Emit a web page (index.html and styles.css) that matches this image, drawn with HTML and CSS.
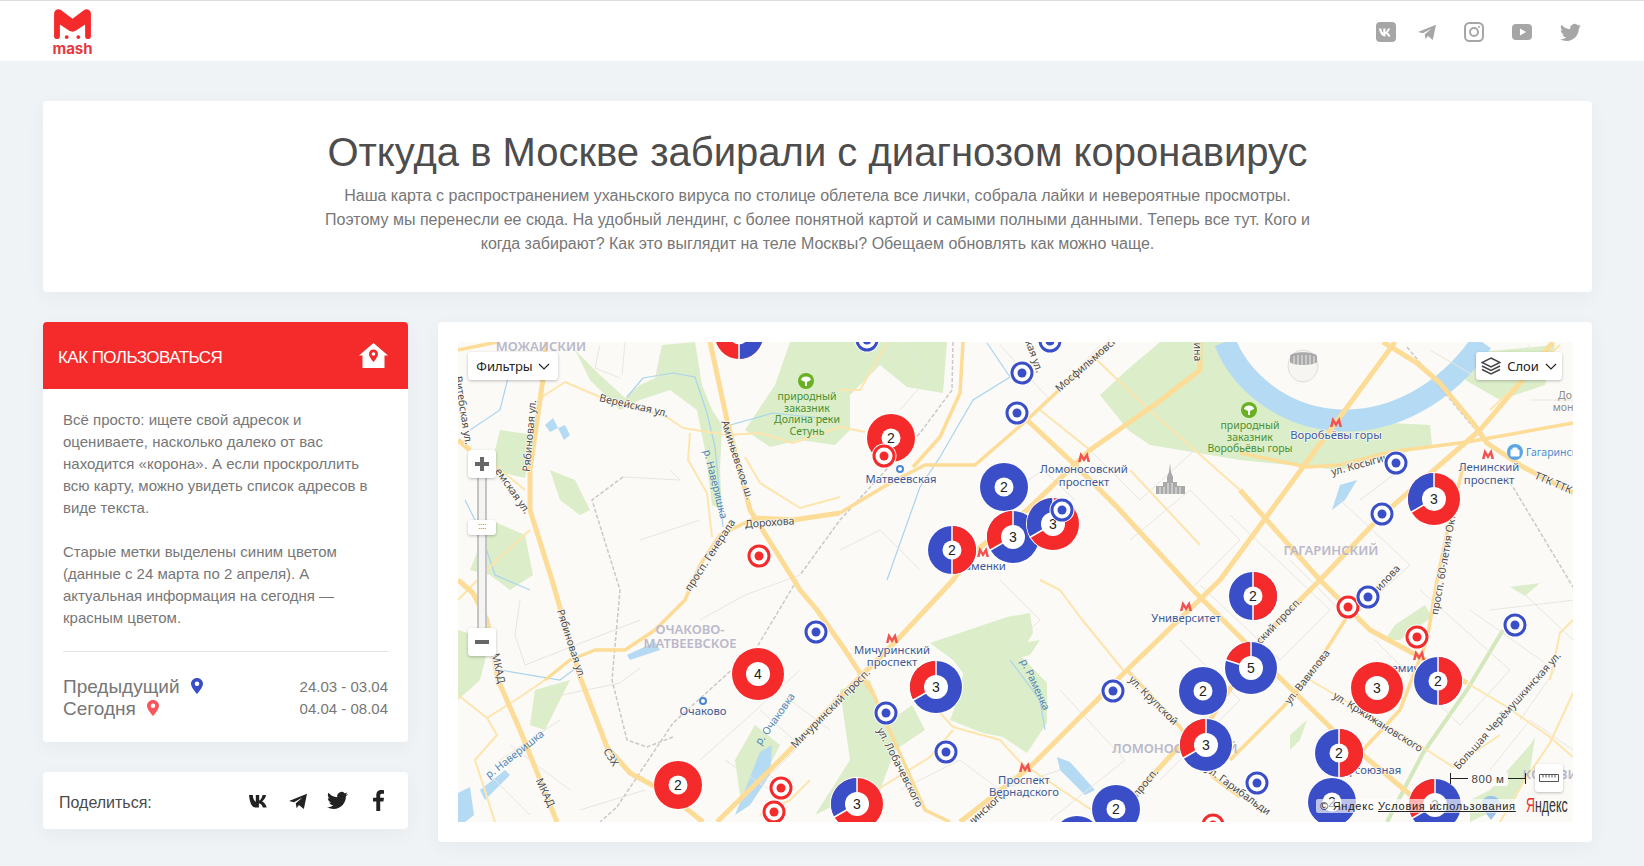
FILE: index.html
```html
<!DOCTYPE html>
<html lang="ru">

<head>
    <meta charset="UTF-8">
    <title>Откуда в Москве забирали с диагнозом коронавирус</title>
    <link rel="stylesheet" href="styles.css">
</head>

<body>
    <header class="topbar">
        <a class="logo" href="#">
            <svg class="logo-mark" viewBox="0 0 40 33">
                <path d="M1 5C1 1 5-1 8 1L20 10 32 1C35-1 39 1 39 5V28C39 32 33 32 33 28V16L24 22C21 24 19 24 16 22L7 16V28C7 32 1 32 1 28Z" />
                <circle cx="14" cy="29" r="2" />
                <circle cx="26" cy="29" r="2" />
            </svg>
            <span class="logo-text">mash</span>
        </a>
        <nav class="social">
            <svg viewBox="0 0 20 20">
                <rect width="20" height="20" rx="4" />
                <path class="cut" d="M3 6.500h2.300c.2 2.600 1.200 4 2 4.300V6.500h2.200v3.500c.9-.1 1.800-1.700 2.200-3.500H14c-.3 2-1.700 3.400-2.600 4 1 .5 2.500 1.700 3.100 3.900h-2.400c-.5-1.500-1.600-2.500-2.600-2.700v2.700h-.4C5.900 14.400 3.800 11.500 3 6.500Z" />
            </svg>
            <svg class="soc-tg" viewBox="0 0 20 20">
                <path d="M0 10 20 2 16.500 19 11 14.500 8.500 18 7.500 12.500 15 6 5.500 11.500Z" />
            </svg>
            <svg viewBox="0 0 20 20" class="insta">
                <rect x="1" y="1" width="18" height="18" rx="4.500" />
                <circle cx="10" cy="10" r="4" />
                <circle class="dot" cx="15" cy="5" r="1" />
            </svg>
            <svg viewBox="0 0 20 20">
                <rect y="2" width="20" height="16" rx="4" />
                <path class="cut" d="M8 6.500 14 10 8 13.500Z" />
            </svg>
            <svg class="soc-tw" viewBox="0 0 24 24">
                <path d="M23.953 4.570a10 10 0 01-2.825.775 4.958 4.958 0 002.163-2.723c-.951.555-2.005.959-3.127 1.184a4.920 4.920 0 00-8.384 4.482C7.690 8.095 4.067 6.130 1.640 3.162a4.822 4.822 0 00-.666 2.475c0 1.710.870 3.213 2.188 4.096a4.904 4.904 0 01-2.228-.616v.060a4.923 4.923 0 003.946 4.827 4.996 4.996 0 01-2.212.085 4.936 4.936 0 004.604 3.417 9.867 9.867 0 01-6.102 2.105c-.390 0-.779-.023-1.170-.067a13.995 13.995 0 007.557 2.209c9.053 0 13.998-7.496 13.998-13.985 0-.210 0-.420-.015-.630A9.935 9.935 0 0024 4.590z" />
            </svg>
        </nav>
    </header>

    <main class="page">
        <section class="card intro">
            <h1>Откуда в Москве забирали с диагнозом коронавирус</h1>
            <p>Наша карта с распространением уханьского вируса по столице облетела все лички, собрала лайки и невероятные просмотры. Поэтому мы перенесли ее сюда. На удобный лендинг, с более понятной картой и самыми полными данными. Теперь все тут. Кого и когда забирают? Как это выглядит на теле Москвы? Обещаем обновлять как можно чаще.</p>
        </section>

        <div class="columns">
            <aside class="sidebar">
                <section class="card howto">
                    <div class="howto-head">
                        <span class="howto-title">КАК ПОЛЬЗОВАТЬСЯ</span>
                        <svg viewBox="0 0 29 25">
                            <path fill-rule="evenodd" d="M14.500 0 29 12.500H25.500V25H3.500V12.500H0ZM14.500 6.500C11.800 6.500 10 8.500 10 11 10 14 14.500 19 14.500 19S19 14 19 11C19 8.500 17.200 6.500 14.500 6.500ZM14.500 9.200A1.800 1.800 0 1 1 14.500 12.800 1.800 1.800 0 1 1 14.500 9.200Z" />
                        </svg>
                    </div>
                    <div class="howto-body">
                        <p>Всё просто: ищете свой адресок и оцениваете, насколько далеко от вас находится «корона». А если проскроллить всю карту, можно увидеть список адресов в виде текста.</p>
                        <p>Старые метки выделены синим цветом (данные с 24 марта по 2 апреля). А актуальная информация на сегодня — красным цветом.</p>
                        <div class="legend">
                            <div class="legend-row">
                                <span class="legend-name">Предыдущий
                                    <svg class="pin pin-blue" viewBox="0 0 12 16"><path fill-rule="evenodd" d="M6 0C2.700 0 0 2.500 0 5.800 0 9.800 6 16 6 16S12 9.800 12 5.800C12 2.500 9.300 0 6 0ZM6 3.500A2.300 2.300 0 1 1 6 8.100 2.300 2.300 0 1 1 6 3.500Z" /></svg>
                                </span>
                                <span class="legend-date">24.03 - 03.04</span>
                            </div>
                            <div class="legend-row">
                                <span class="legend-name">Сегодня
                                    <svg class="pin pin-red" viewBox="0 0 12 16"><path fill-rule="evenodd" d="M6 0C2.700 0 0 2.500 0 5.800 0 9.800 6 16 6 16S12 9.800 12 5.800C12 2.500 9.300 0 6 0ZM6 3.500A2.300 2.300 0 1 1 6 8.100 2.300 2.300 0 1 1 6 3.500Z" /></svg>
                                </span>
                                <span class="legend-date">04.04 - 08.04</span>
                            </div>
                        </div>
                    </div>
                </section>

                <section class="card share">
                    <span class="share-label">Поделиться:</span>
                    <div class="share-icons">
                        <svg viewBox="0 0 20 14" class="ic-vk">
                            <path d="M0 1h3.800c.2 4 1.700 6.300 3 6.800V1h3.400v5.500c1.300-.1 2.800-2.700 3.400-5.500h3.500c-.5 3.200-2.700 5.400-4.100 6.300 1.500.8 3.700 2.700 4.700 6.200h-3.800c-.7-2.300-2.500-4-4-4.200v4.200H6.500C2.700 13.500.8 8.700 0 1Z" />
                        </svg>
                        <svg viewBox="0 0 20 20" class="ic-tg">
                            <path d="M0 10 20 2 16.500 19 11 14.500 8.500 18 7.500 12.500 15 6 5.500 11.500Z" />
                        </svg>
                        <svg viewBox="0 0 24 24" class="ic-tw">
                            <path d="M23.953 4.570a10 10 0 01-2.825.775 4.958 4.958 0 002.163-2.723c-.951.555-2.005.959-3.127 1.184a4.920 4.920 0 00-8.384 4.482C7.690 8.095 4.067 6.130 1.640 3.162a4.822 4.822 0 00-.666 2.475c0 1.710.870 3.213 2.188 4.096a4.904 4.904 0 01-2.228-.616v.060a4.923 4.923 0 003.946 4.827 4.996 4.996 0 01-2.212.085 4.936 4.936 0 004.604 3.417 9.867 9.867 0 01-6.102 2.105c-.390 0-.779-.023-1.170-.067a13.995 13.995 0 007.557 2.209c9.053 0 13.998-7.496 13.998-13.985 0-.210 0-.420-.015-.630A9.935 9.935 0 0024 4.590z" />
                        </svg>
                        <svg viewBox="0 0 11 21" class="ic-fb">
                            <path d="M7.200 21V11.500H10.400L11 7.700H7.200V5.500C7.200 4.400 7.500 3.700 9 3.700H11V.3C10.500.2 9.500 0 8.300 0 5.400 0 3.300 1.800 3.300 5.100V7.700H0V11.500H3.300V21Z" />
                        </svg>
                    </div>
                </section>
            </aside>

            <section class="card map-card">
                <div class="map">
                    <!-- viewBox совпадает с координатами страницы, так проще сверять с картой -->
                    <svg class="map-canvas" viewBox="458 342 1115 480">
                        <defs>
                            <g id="metro"><path d="M-6 5-3.500-5 0 .5 3.500-5 6 5H3.500L2.500 1 0 5-2.500 1-3.500 5Z" /></g>
                            <g id="rail"><circle r="3" /></g>
                            <g id="tb">
                                <circle r="12.500" class="halo" />
                                <circle r="10" class="ring-line blue-line" />
                                <circle r="4.500" class="fill-blue" />
                            </g>
                            <g id="tr">
                                <circle r="12.500" class="halo" />
                                <circle r="10" class="ring-line red-line" />
                                <circle r="4.500" class="fill-red" />
                            </g>
                            <g id="c-red24"><circle r="25" class="halo" /><circle r="24" class="fill-red" /><circle r="9.500" class="hole" /></g>
                            <g id="c-blue24"><circle r="25" class="halo" /><circle r="24" class="fill-blue" /><circle r="9.500" class="hole" /></g>
                            <g id="c-red26"><circle r="27" class="halo" /><circle r="26" class="fill-red" /><circle r="12" class="hole" /></g>
                            <g id="c-half">
                                <circle r="25" class="halo" />
                                <circle r="24" class="fill-blue" />
                                <path d="M0-24A24 24 0 0 1 0 24Z" class="fill-red" />
                                <path d="M0-25V25" class="sep" />
                                <circle r="9.500" class="hole" />
                            </g>
                            <g id="c-half-inv">
                                <circle r="25" class="halo" />
                                <circle r="24" class="fill-red" />
                                <path d="M0-24A24 24 0 0 1 0 24Z" class="fill-blue" />
                                <path d="M0-25V25" class="sep" />
                                <circle r="9.500" class="hole" />
                            </g>
                            <g id="c-3a">
                                <circle r="27" class="halo" />
                                <circle r="26" class="fill-red" />
                                <path d="M0 0-22.500 13A26 26 0 0 1 0-26Z" class="fill-blue" />
                                <path d="M0 0V-27M0 0-23.400 13.500" class="sep" />
                                <circle r="12" class="hole" />
                            </g>
                            <g id="c-3b">
                                <circle r="27" class="halo" />
                                <circle r="26" class="fill-blue" />
                                <path d="M0 0-22.500 13A26 26 0 0 1 0-26Z" class="fill-red" />
                                <path d="M0 0V-27M0 0-23.400 13.500" class="sep" />
                                <circle r="12" class="hole" />
                            </g>
                            <g id="c-5">
                                <circle r="27" class="halo" />
                                <circle r="26" class="fill-blue" />
                                <path d="M0 0-24.700-8A26 26 0 0 1 0-26Z" class="fill-red" />
                                <path d="M0 0V-27M0 0-25.700-8.300" class="sep" />
                                <circle r="12" class="hole" />
                            </g>
                        </defs>

                        <rect x="458" y="342" width="1115" height="480" class="land" />

                        <!-- зелень -->
                        <g class="green">
                            <path d="M1160 342H1223L1243 370 1273 410 1333 427 1390 423 1430 425 1432 445 1340 470 1240 460 1150 445 1128 430 1100 395 1127 370Z" />
                            <path d="M930 643 1007 617 1030 613 1033 633 1020 655 1047 683 1047 723 1027 753 1003 737 983 733 950 720 960 693 963 673 953 660Z" />
                            <path d="M575 350 600 375 625 398 640 385 655 378 662 345 695 342 702 385 712 410 722 425 720 470 722 510 712 505 705 450 697 410 670 390 640 400 620 410 590 380Z" />
                            <path d="M745 430 775 385 790 342H947L943 393 907 387 880 365 850 395 850 430 835 445 800 440 770 447Z" />
                            <path d="M840 690 870 680 885 725 912 705 925 730 895 750 880 790 845 800 815 815 850 760Z" />
                            <path d="M490 520 525 535 533 575 510 590 490 575 470 570Z" />
                            <path d="M500 430 535 435 525 478 490 470Z" />
                            <path d="M550 470 575 480 590 510 580 515 560 500 555 485Z" />
                            <path d="M1012 645 1040 640 1030 655 1010 660Z" />
                            <path d="M1480 352 1555 345 1545 385 1500 400 1465 380Z" />
                            <path d="M1490 790 1530 745 1535 737 1530 770 1515 800 1470 822 1470 800Z" />
                            <path d="M1395 625 1425 605 1432 617 1400 640 1385 640Z" />
                            <path d="M1290 735 1307 720 1300 740 1290 750Z" />
                            <path d="M458 630 490 640 480 680 458 700Z" />
                            <path d="M535 690 570 680 560 700 545 730 530 725Z" />
                            <path d="M1510 587 1540 583 1525 596Z" />
                            <path d="M755 725 780 745 750 805 740 795 735 760Z" />
                        </g>
                        <path class="strip" d="M1503 630 1467 690 1423 753 1387 822" />

                        <!-- вода -->
                        <path class="river" d="M1225 342C1240 380 1280 415 1333 420 1390 425 1445 395 1482 342" />
                        <g class="water">
                            <path d="M458 793 470 787 474 815 465 822H458Z" />
                            <path d="M545 425 553 418 558 428 550 432ZM558 428 565 425 570 435 564 440Z" />
                            <path d="M760 752 772 745 770 775 750 805 735 815 745 790Z" />
                            <path d="M627 655 655 642 660 650 630 660Z" />
                            <path d="M1057 757 1070 762 1095 790 1085 795 1060 770Z" />
                            <path d="M1340 485 1357 480 1345 500 1332 510Z" />
                            <path d="M480 790 505 770 510 775 485 800Z" />
                        </g>
                        <g class="stream">
                            <path d="M627 397 643 378 673 373 695 377 707 413 715 447 723 527" />
                            <path d="M723 427 773 413 840 420" />
                            <path d="M887 580 920 487 940 457 973 400 1010 377 987 343" />
                            <path d="M1010 660 1040 700 1045 730" />
                            <path d="M465 500 480 530 495 575 530 590M470 430 500 410 510 370" />
                            <path d="M500 670 560 680 580 665" />
                        </g>

                        <!-- мелкие улицы -->
                        <g class="lane">
                            <path d="M600 345 595 368 620 378M625 342 622 375M660 355 658 380" />
                            <path d="M640 540 700 520M622 477 680 480 670 470M538 700 620 683 640 668" />
                            <path d="M580 810 645 790M700 620 745 595 800 575M640 620 525 665 515 635 520 600" />
                            <path d="M760 710 800 745 760 785M725 760 770 790M790 700 830 730M700 760 745 720 800 670" />
                            <path d="M1000 345 1050 400 1100 345M1090 450 1140 500 1200 445M1130 540 1190 490 1240 540 1190 590" />
                            <path d="M1000 500 1043 470 1075 500M1000 580 1040 620 1000 660" />
                            <path d="M1060 690 1125 760 1050 820M1180 640 1240 700 1160 780" />
                            <path d="M1230 515 1330 610 1280 660 1200 585M1340 500 1410 565 1350 620 1290 560" />
                            <path d="M1420 590 1510 670 1460 725 1375 640M1470 610 1555 670 1520 720" />
                            <path d="M1520 590 1573 640M1490 610 1575 600M1490 770 1530 720 1573 750" />
                            <path d="M500 760 560 720M490 775 530 815M510 745 570 790" />
                            <path d="M1360 500 1400 470M1430 350 1490 385 1530 345M1530 400 1573 400" />
                            <path d="M900 340 930 375 900 410M840 550 880 530 920 570M900 790 960 760 1000 790 1060 770" />
                        </g>

                        <!-- железная дорога -->
                        <g class="rails">
                            <path d="M797 580 757 647 673 723 617 807 600 822" />
                            <path d="M623 477 592 500 620 590 612 680 627 740 647 747 673 737" />
                            <path d="M953 342 952 390 920 433 840 520 800 575" />
                            <path d="M1407 347 1473 427M1507 477 1573 587" />
                        </g>

                        <!-- второстепенные дороги -->
                        <g class="road-minor">
                            <path d="M542 397 565 382 600 397 667 417 683 428 727 435 760 433 793 443 840 427 865 432" />
                            <path d="M745 457 760 483 800 508 840 497M690 433 688 460 707 493 712 537" />
                            <path d="M887 343 860 390 840 390M1097 360 1147 408 1240 490" />
                            <path d="M880 788 930 757 953 730M940 713 953 727 1000 740 1020 762 1087 807 1115 822" />
                            <path d="M1040 580 1060 590 1080 617 1123 670M1090 450 1040 410M1130 470 1200 545" />
                            <path d="M1310 680 1373 717 1427 750 1453 767 1473 753 1500 735" />
                            <path d="M1573 693 1550 743 1523 783 1500 822M1573 620 1560 633 1550 680" />
                            <path d="M458 695 487 718 520 697 545 680M487 718 497 735 475 760 495 822" />
                            <path d="M458 600 497 560 530 530M470 450 497 467 525 490" />
                            <path d="M1467 683 1507 707 1550 737 1573 757" />
                            <path d="M1560 345 1490 410" />
                            <path d="M760 815 790 800 810 780" />
                        </g>

                        <!-- основные дороги -->
                        <g class="road-mid">
                            <path d="M755 518 720 535 700 565 685 600 655 630 625 650 595 650 570 660 545 680" />
                            <path d="M840 513 890 483 925 465 975 465 1027 420 1110 342" />
                            <path d="M873 693 925 810 950 822" />
                            <path d="M1127 670 1180 727 1213 777 1240 797" />
                            <path d="M1230 760 1283 707 1307 680 1347 617" />
                            <path d="M1463 467 1447 533 1437 580 1427 640 1400 710 1363 750" />
                            <path d="M1240 453 1307 467 1340 465 1390 452 1467 442 1573 423" />
                            <path d="M458 350 497 342M542 380 546 342" />
                            <path d="M963 342 960 393 940 437 913 467" />
                        </g>
                        <g class="road-major">
                            <path d="M710 342 727 420 750 510 777 553 800 590 817 610 845 650 873 693" />
                            <path d="M840 513 793 520 755 518" />
                            <path d="M458 580 473 593 487 620 498 680 520 730 557 822" />
                            <path d="M545 365 530 470 530 510 552 580 580 677 607 747 630 773 667 793 703 822" />
                            <path d="M1027 420 1073 463 1117 507 1193 590 1240 637 1277 675 1333 730 1413 797 1430 822" />
                            <path d="M1200 342 1200 370 1157 403 1090 450 1027 510 973 553 953 580 900 637 840 697 787 753 717 822" />
                            <path d="M1240 490 1320 580 1370 630 1407 650 1467 683" />
                            <path d="M1553 342 1520 383 1480 430 1380 517 1320 580 1263 637 1210 720 1173 753 1133 797 1100 822" />
                            <path d="M1395 342 1340 417 1303 467 1220 580 1127 670 1030 767 960 822" />
                            <path d="M1383 342 1417 363 1440 383 1473 423 1487 443 1523 467 1573 493" />
                            <path d="M458 440 470 450" />
                        </g>

                        <!-- районы -->
                        <g class="lb-area">
                            <text x="541" y="351">МОЖАЙСКИЙ</text>
                            <text x="690" y="634">ОЧАКОВО-</text>
                            <text x="690" y="648">МАТВЕЕВСКОЕ</text>
                            <text x="1331" y="555">ГАГАРИНСКИЙ</text>
                            <text x="1175" y="753">ЛОМОНОСОВСКИЙ</text>
                            <text x="1560" y="779">КОРОВИНО</text>
                        </g>
                        <g class="lb-grey">
                            <text x="1565" y="399">До</text>
                            <text x="1563" y="411">мон</text>
                        </g>

                        <!-- улицы -->
                        <g class="lb-road">
                            <text transform="translate(633 409) rotate(13)">Верейская ул.</text>
                            <text transform="translate(533 436) rotate(-85)">Рябиновая ул.</text>
                            <text transform="translate(568 645) rotate(72)">Рябиновая ул.</text>
                            <text transform="translate(460 411) rotate(81)">Витебская ул.</text>
                            <text transform="translate(734 461) rotate(72)">Аминьевское ш.</text>
                            <text transform="translate(770 526) rotate(-4)">Дорохова</text>
                            <text transform="translate(713 557) rotate(-57)">просп. Генерала</text>
                            <text transform="translate(510 493) rotate(55)">емская ул.</text>
                            <text transform="translate(495 669) rotate(78)">МКАД</text>
                            <text transform="translate(542 794) rotate(65)">МКАД</text>
                            <text transform="translate(608 759) rotate(58)">СЗХ</text>
                            <text transform="translate(833 711) rotate(-45)">Мичуринский просп.</text>
                            <text transform="translate(897 769) rotate(63)">ул. Лобачевского</text>
                            <text transform="translate(1093 363) rotate(-41)">Мосфильмовская</text>
                            <text transform="translate(1364 467) rotate(-15)">ул. Косыгина</text>
                            <text transform="translate(1552 486) rotate(23)">ТТК ТТК</text>
                            <text transform="translate(1449 553) rotate(-80)">просп. 60-летия Октября</text>
                            <text transform="translate(1151 703) rotate(45)">ул. Крупской</text>
                            <text transform="translate(1270 635) rotate(-46)">Ленинский просп.</text>
                            <text transform="translate(1310 679) rotate(-52)">ул. Вавилова</text>
                            <text transform="translate(1384 587) rotate(-47)">Вавилова</text>
                            <text transform="translate(1376 725) rotate(32)">ул. Кржижановского</text>
                            <text transform="translate(1510 713) rotate(-48)">Большая Черёмушкинская ул.</text>
                            <text transform="translate(1236 793) rotate(36)">ул. Гарибальди</text>
                            <text transform="translate(983 816) rotate(-42)">Ленинского</text>
                            <text transform="translate(1148 785) rotate(-50)">просп.</text>
                            <text transform="translate(1194 352) rotate(90)">ина</text>
                            <text transform="translate(1030 355) rotate(70)">ская ул.</text>
                        </g>
                        <g class="lb-river">
                            <text transform="translate(712 485) rotate(76)">р. Наверишка</text>
                            <text transform="translate(517 757) rotate(-38)">р. Наверишка</text>
                            <text transform="translate(778 721) rotate(-55)">р. Очаковка</text>
                            <text transform="translate(1032 686) rotate(65)">р. Раменка</text>
                        </g>

                        <!-- метро -->
                        <g class="lb-metro">
                            <text x="901" y="483">Матвеевская</text>
                            <text x="1084" y="473">Ломоносовский</text>
                            <text x="1084" y="486">проспект</text>
                            <text x="982" y="570">Раменки</text>
                            <text x="1489" y="471">Ленинский</text>
                            <text x="1489" y="484">проспект</text>
                            <text x="1336" y="439">Воробьёвы горы</text>
                            <text x="1186" y="622">Университет</text>
                            <text x="892" y="654">Мичуринский</text>
                            <text x="892" y="666">проспект</text>
                            <text x="703" y="715">Очаково</text>
                            <text x="1024" y="784">Проспект</text>
                            <text x="1024" y="796">Вернадского</text>
                            <text x="1363" y="774">Профсоюзная</text>
                            <text x="1408" y="672">Академическая</text>
                        </g>
                        <g class="metro-icons">
                            <use href="#metro" x="1084" y="457" />
                            <use href="#metro" x="983" y="552" />
                            <use href="#metro" x="1336" y="422" />
                            <use href="#metro" x="1488" y="454" />
                            <use href="#metro" x="1186" y="606" />
                            <use href="#metro" x="892" y="638" />
                            <use href="#metro" x="1025" y="767" />
                            <use href="#metro" x="1419" y="655" />
                        </g>
                        <g class="rail-icons">
                            <use href="#rail" x="900" y="469" />
                            <use href="#rail" x="703" y="701" />
                        </g>

                        <!-- заказники -->
                        <g class="lb-park">
                            <text x="807" y="400">природный</text>
                            <text x="807" y="412">заказник</text>
                            <text x="807" y="423">Долина реки</text>
                            <text x="807" y="435">Сетунь</text>
                            <text x="1250" y="429">природный</text>
                            <text x="1250" y="441">заказник</text>
                            <text x="1250" y="452">Воробьёвы горы</text>
                        </g>
                        <g class="park-icons">
                            <circle cx="806" cy="381" r="8" />
                            <circle cx="1249" cy="410" r="8" />
                            <path class="tree" d="M801 380A5 3.500 0 0 1 811 380L807 382V386H805V382ZM1244 409A5 3.500 0 0 1 1254 409L1250 411V415H1248V411Z" />
                        </g>

                        <!-- Гагаринский -->
                        <circle cx="1515" cy="452" r="8" class="shop" />
                        <path class="shop-bag" d="M1511 450H1519V456H1511ZM1513 450V448H1517V450" />
                        <text x="1526" y="456" class="lb-shop">Гагаринский</text>

                        <!-- МГУ и стадион -->
                        <path class="landmark" d="M1170 463 1171 472 1173 477V482H1177V486H1185V494H1156V486H1163V482H1167V477L1169 472Z" />
                        <path class="landmark-lines" d="M1160 487V494M1164 487V494M1168 483V494M1172 483V494M1176 487V494M1180 487V494" />
                        <ellipse class="stadium-ring" cx="1303" cy="366" rx="15" ry="16" />
                        <path class="landmark" d="M1290 356C1292 351 1314 351 1317 356V362C1314 366 1292 366 1290 362Z" />
                        <path class="landmark-lines" d="M1294 356V364M1298 355V365M1302 355V365M1306 355V365M1310 355V365M1314 356V364" />

                        <!-- метки -->
                        <use href="#c-half-inv" x="739" y="335" />
                        <use href="#c-red24" x="891" y="438" />
                        <use href="#c-blue24" x="1004" y="487" />
                        <use href="#c-3b" x="1013" y="537" />
                        <use href="#c-3a" x="1053" y="524" />
                        <use href="#c-half" x="952" y="550" />
                        <use href="#c-3a" x="1434" y="499" />
                        <use href="#c-half" x="1253" y="596" />
                        <use href="#c-5" x="1251" y="668" />
                        <use href="#c-red26" x="758" y="674" />
                        <use href="#c-red24" x="678" y="785" />
                        <use href="#c-3b" x="936" y="687" />
                        <use href="#c-3a" x="857" y="804" />
                        <use href="#c-blue24" x="1077" y="840" />
                        <use href="#c-blue24" x="1116" y="809" />
                        <use href="#c-blue24" x="1203" y="691" />
                        <use href="#c-3b" x="1206" y="745" />
                        <use href="#c-red26" x="1377" y="688" />
                        <use href="#c-half" x="1438" y="681" />
                        <use href="#c-half" x="1339" y="753" />
                        <use href="#c-blue24" x="1332" y="802" />
                        <use href="#c-3b" x="1435" y="805" />

                        <g class="num">
                            <text x="891" y="443">2</text>
                            <text x="1004" y="492">2</text>
                            <text x="1013" y="542">3</text>
                            <text x="1053" y="529">3</text>
                            <text x="952" y="555">2</text>
                            <text x="1434" y="504">3</text>
                            <text x="1253" y="601">2</text>
                            <text x="1251" y="673">5</text>
                            <text x="758" y="679">4</text>
                            <text x="678" y="790">2</text>
                            <text x="936" y="692">3</text>
                            <text x="857" y="809">3</text>
                            <text x="1116" y="814">2</text>
                            <text x="1203" y="696">2</text>
                            <text x="1206" y="750">3</text>
                            <text x="1377" y="693">3</text>
                            <text x="1438" y="686">2</text>
                            <text x="1339" y="758">2</text>
                            <text x="1332" y="807">2</text>
                            <text x="1435" y="810">3</text>
                        </g>

                        <use href="#tr" x="884" y="456" />
                        <use href="#tb" x="1062" y="510" />
                        <use href="#tb" x="1022" y="373" />
                        <use href="#tb" x="1017" y="413" />
                        <use href="#tb" x="1050" y="341" />
                        <use href="#tb" x="867" y="340" />
                        <use href="#tr" x="759" y="556" />
                        <use href="#tb" x="1396" y="463" />
                        <use href="#tb" x="1382" y="514" />
                        <use href="#tb" x="816" y="632" />
                        <use href="#tr" x="781" y="788" />
                        <use href="#tr" x="774" y="812" />
                        <use href="#tb" x="886" y="713" />
                        <use href="#tb" x="946" y="752" />
                        <use href="#tb" x="1113" y="691" />
                        <use href="#tr" x="1213" y="825" />
                        <use href="#tr" x="1348" y="607" />
                        <use href="#tb" x="1368" y="597" />
                        <use href="#tr" x="1417" y="637" />
                        <use href="#tb" x="1515" y="625" />
                        <use href="#tb" x="1257" y="783" />

                        <path class="geo" d="M1491 796A9 9 0 0 1 1497 812L1491 820 1485 812A9 9 0 0 1 1491 796Z" />
                    </svg>

                    <button class="map-btn btn-filter">Фильтры
                        <svg class="chev" viewBox="0 0 12 7"><path d="M1 1 6 6 11 1" /></svg>
                    </button>
                    <button class="map-btn btn-layers">
                        <svg class="layers" viewBox="0 0 20 18">
                            <path d="M10 1 19 5.500 10 10 1 5.500Z" />
                            <path d="M1 9 10 13.500 19 9" />
                            <path d="M1 12.500 10 17 19 12.500" />
                        </svg>
                        Слои
                        <svg class="chev" viewBox="0 0 12 7"><path d="M1 1 6 6 11 1" /></svg>
                    </button>

                    <div class="zoom-track"></div>
                    <button class="map-btn zoom-btn zoom-plus"><span class="bar-h"></span><span class="bar-v"></span></button>
                    <div class="zoom-handle">::::</div>
                    <button class="map-btn zoom-btn zoom-minus"><span class="bar-h"></span></button>

                    <div class="scale-bar"><span class="scale-text">800 м</span></div>
                    <button class="map-btn ruler-btn">
                        <svg viewBox="0 0 20 8"><path d="M.5.5H19.500V7.500H.5ZM4 .5V3.500M7 .5V3.500M10 .5V3.500M13 .5V3.500M16 .5V3.500" /></svg>
                    </button>
                    <div class="copyright">© Яндекс <a href="#">Условия использования</a></div>
                    <div class="ya-logo"><span>Я</span>ндекс</div>
                </div>
            </section>
        </div>
    </main>
</body>

</html>
```

FILE: styles.css
```css
body {
    margin: 0;
    padding: 0;
    background: #f0f3f6;
    font-family: "Liberation Sans", Arial, sans-serif;
    color: #777777;
}

.topbar {
    height: 60px;
    border-top: 1px solid #dddddd;
    background: #ffffff;
    display: flex;
    justify-content: space-between;
    align-items: center;
    padding: 0 63px 0 53px;
}

.logo {
    display: flex;
    flex-direction: column;
    align-items: center;
    width: 39px;
    margin-top: 3px;
    text-decoration: none;
}

.logo-mark {
    width: 39px;
    height: 32px;
    fill: #f52a2a;
}

.logo-text {
    font-family: "Inter", sans-serif;
    font-size: 15px;
    line-height: 15px;
    font-weight: 700;
    color: #e23a3f;
}

.social {
    display: flex;
    align-items: center;
    gap: 28px;
    margin-top: 2px;
}

.social svg {
    width: 20px;
    height: 20px;
    fill: #a6a6a6;
}

.social .soc-tg {
    width: 18px;
    margin-left: -6px;
}

.social .soc-tw {
    width: 21px;
    height: 21px;
}

.social .cut {
    fill: #ffffff;
}

.social .insta {
    fill: none;
    stroke: #a6a6a6;
    stroke-width: 2;
}

.social .insta .dot {
    fill: #a6a6a6;
    stroke: none;
}

.page {
    padding: 40px 52px 24px 43px;
}

.card {
    background: #ffffff;
    border-radius: 4px;
    box-shadow: 0 5px 20px rgba(0, 0, 0, 0.04);
}

.intro {
    height: 191px;
    box-sizing: border-box;
    padding-top: 28px;
    margin-bottom: 30px;
    text-align: center;
}

.intro h1 {
    margin: 0 0 9px;
    font-size: 40px;
    line-height: 46px;
    font-weight: 400;
    color: #4d4d4d;
}

.intro p {
    width: 1000px;
    margin: 0 auto;
    font-size: 16px;
    line-height: 24px;
}

.columns {
    display: flex;
    gap: 30px;
    align-items: flex-start;
}

.sidebar {
    width: 365px;
    flex-shrink: 0;
    display: flex;
    flex-direction: column;
    gap: 30px;
}

.howto {
    height: 420px;
    overflow: hidden;
}

.howto-head {
    height: 67px;
    background: #f52a2a;
    color: #ffffff;
    display: flex;
    justify-content: space-between;
    align-items: center;
    padding: 0 20px 0 15px;
}

.howto-title {
    font-size: 17px;
    letter-spacing: -0.55px;
    padding-top: 4px;
}

.howto-head svg {
    width: 29px;
    height: 25px;
    fill: #ffffff;
}

.howto-body {
    padding: 20px 20px 0;
    font-size: 15px;
    line-height: 22px;
}

.howto-body p {
    margin: 0 0 22px;
}

.legend {
    border-top: 1px solid #e4e4e4;
    margin-top: 4px;
    padding-top: 24px;
}

.legend-row {
    display: flex;
    justify-content: space-between;
    align-items: center;
    height: 22px;
}

.legend-name {
    font-size: 19px;
    display: flex;
    align-items: center;
    gap: 11px;
}

.legend-date {
    font-size: 15px;
}

.pin {
    width: 12px;
    height: 16px;
    margin-top: -2px;
}

.pin-blue {
    fill: #3a4fc7;
}

.pin-red {
    fill: #f9555c;
}

.share {
    height: 57px;
    display: flex;
    justify-content: space-between;
    align-items: center;
    padding: 0 24px 0 16px;
    font-size: 16px;
    color: #4a4a4a;
}

.share-label {
    padding-top: 4px;
}

.share-icons {
    display: flex;
    align-items: center;
    gap: 20px;
}

.share-icons svg {
    fill: #222222;
}

.ic-vk {
    width: 20px;
    height: 14px;
}

.ic-tg {
    width: 18px;
    height: 18px;
}

.ic-tw {
    width: 21px;
    height: 21px;
}

.ic-fb {
    width: 11px;
    height: 21px;
    margin-left: 5px;
}

.map-card {
    width: 1154px;
    height: 520px;
    box-sizing: border-box;
    padding: 20px 19px 20px 20px;
}

.map {
    position: relative;
    width: 1115px;
    height: 480px;
    overflow: hidden;
}

.map-canvas {
    display: block;
    width: 1115px;
    height: 480px;
    font-family: "Noto Sans", "Open Sans", sans-serif;
}

.land {
    fill: #fcfaf6;
}

.green path {
    fill: #dbedc9;
}

.strip {
    fill: none;
    stroke: #d3e8bd;
    stroke-width: 4;
}

.river {
    fill: none;
    stroke: #b5daf3;
    stroke-width: 22;
}

.water path {
    fill: #b5daf3;
}

.stream path {
    fill: none;
    stroke: #a9d4ee;
    stroke-width: 1.200;
}

.lane path {
    fill: none;
    stroke: #e8e6e0;
    stroke-width: 1;
}

.rails path {
    fill: none;
    stroke: #c9c9c9;
    stroke-width: 1.500;
    stroke-dasharray: 4 2;
}

.road-minor path {
    fill: none;
    stroke: #fde5ad;
    stroke-width: 2;
    stroke-linejoin: round;
}

.road-mid path {
    fill: none;
    stroke: #fcdc96;
    stroke-width: 3.500;
    stroke-linejoin: round;
}

.road-major path {
    fill: none;
    stroke: #fcdc96;
    stroke-width: 5;
    stroke-linejoin: round;
}

.lb-area text {
    font-size: 13px;
    font-weight: 600;
    fill: #b9b9cb;
    text-anchor: middle;
}

.lb-grey text {
    font-size: 10.500px;
    fill: #8c8c8c;
    text-anchor: middle;
}

.lb-road text {
    font-size: 10.500px;
    fill: #4a4a4a;
    text-anchor: middle;
    paint-order: stroke;
    stroke: #fcfaf6;
    stroke-width: 1.500px;
}

.lb-river text {
    font-size: 10.500px;
    fill: #4f86b8;
    text-anchor: middle;
}

.lb-metro text {
    font-size: 11.300px;
    fill: #3d5a97;
    text-anchor: middle;
    paint-order: stroke;
    stroke: #fcfaf6;
    stroke-width: 1.500px;
}

.lb-park text {
    font-size: 10.500px;
    fill: #4c9130;
    text-anchor: middle;
}

.lb-shop {
    font-size: 10.500px;
    fill: #4a8fd0;
}

.metro-icons {
    fill: #f2514f;
}

.rail-icons {
    fill: #ffffff;
    stroke: #4a86d8;
    stroke-width: 2;
}

.park-icons circle {
    fill: #6ab023;
}

.tree {
    fill: #ffffff;
}

.shop {
    fill: #5aa5e6;
}

.shop-bag {
    fill: #ffffff;
    stroke: #ffffff;
    stroke-width: 1;
}

.landmark {
    fill: #a9a9a9;
}

.landmark-lines {
    fill: none;
    stroke: #ececec;
    stroke-width: 1;
}

.stadium-ring {
    fill: #f6f5f1;
    stroke: #dededa;
    stroke-width: 1;
}

.geo {
    fill: #9cc4ea;
}

.halo {
    fill: #ffffff;
}

.hole {
    fill: #ffffff;
}

.fill-red {
    fill: #f52a2a;
}

.fill-blue {
    fill: #3a4fc7;
}

.ring-line {
    fill: #ffffff;
    stroke-width: 3;
}

.red-line {
    stroke: #f52a2a;
}

.blue-line {
    stroke: #3a4fc7;
}

.sep {
    fill: none;
    stroke: #ffffff;
    stroke-width: 1.500;
}

.num text {
    font-family: "Liberation Sans", sans-serif;
    font-size: 14px;
    fill: #222222;
    text-anchor: middle;
}

/* контролы поверх карты */
.map-btn {
    position: absolute;
    border: none;
    padding: 0;
    background: #ffffff;
    border-radius: 3px;
    box-shadow: 0 1px 3px rgba(0, 0, 0, 0.25);
    font-family: "Noto Sans", "Open Sans", sans-serif;
    font-size: 13px;
    color: #222222;
    display: flex;
    align-items: center;
    justify-content: center;
}

.btn-filter {
    left: 10px;
    top: 10px;
    width: 90px;
    height: 28px;
    gap: 5px;
}

.btn-layers {
    right: 11px;
    top: 10px;
    width: 86px;
    height: 28px;
    gap: 6px;
}

.chev {
    width: 12px;
    height: 7px;
    fill: none;
    stroke: #222222;
    stroke-width: 1.200;
}

.layers {
    width: 20px;
    height: 18px;
    fill: none;
    stroke: #444444;
    stroke-width: 1.500;
}

.zoom-track {
    position: absolute;
    left: 19px;
    top: 130px;
    width: 6px;
    height: 160px;
    background: #f4f4f2;
    border-left: 2px solid #c4c4c4;
    border-right: 2px solid #c4c4c4;
}

.zoom-btn {
    left: 10px;
    width: 28px;
    height: 28px;
}

.zoom-plus {
    top: 108px;
}

.zoom-minus {
    top: 286px;
}

.bar-h {
    position: absolute;
    left: 7px;
    top: 12px;
    width: 14px;
    height: 4px;
    background: #666666;
}

.bar-v {
    position: absolute;
    left: 12px;
    top: 7px;
    width: 4px;
    height: 14px;
    background: #666666;
}

.zoom-handle {
    position: absolute;
    left: 10px;
    top: 178px;
    width: 28px;
    height: 15px;
    background: #ffffff;
    border-radius: 3px;
    box-shadow: 0 1px 3px rgba(0, 0, 0, 0.25);
    font-size: 9px;
    line-height: 13px;
    letter-spacing: -0.5px;
    text-align: center;
    color: #888888;
}

.scale-bar {
    position: absolute;
    left: 992px;
    top: 431px;
    width: 74px;
    height: 11px;
    display: flex;
    justify-content: center;
    align-items: center;
    border-left: 1px solid #222222;
    border-right: 1px solid #222222;
    background: linear-gradient(#222222, #222222) center / 100% 1px no-repeat;
}

.scale-text {
    background: #fafafa;
    padding: 0 4px;
    border-radius: 2px;
    font-size: 11.500px;
    line-height: 14px;
    letter-spacing: 0.5px;
    color: #444444;
}

.ruler-btn {
    left: 1077px;
    top: 422px;
    width: 28px;
    height: 28px;
}

.ruler-btn svg {
    width: 20px;
    height: 8px;
    fill: none;
    stroke: #555555;
    stroke-width: 1;
}

.copyright {
    position: absolute;
    left: 858px;
    top: 457px;
    padding: 0 4px;
    height: 14px;
    background: rgba(255, 255, 255, 0.65);
    border-radius: 2px;
    font-size: 11px;
    line-height: 14px;
    letter-spacing: 0.75px;
    color: #222222;
    white-space: nowrap;
}

.copyright a {
    color: #222222;
}

.ya-logo {
    position: absolute;
    left: 1068px;
    top: 452px;
    font-size: 20px;
    line-height: 22px;
    color: #333333;
    transform: scaleX(0.62);
    transform-origin: left center;
}

.ya-logo span {
    color: #f52a2a;
}
```
